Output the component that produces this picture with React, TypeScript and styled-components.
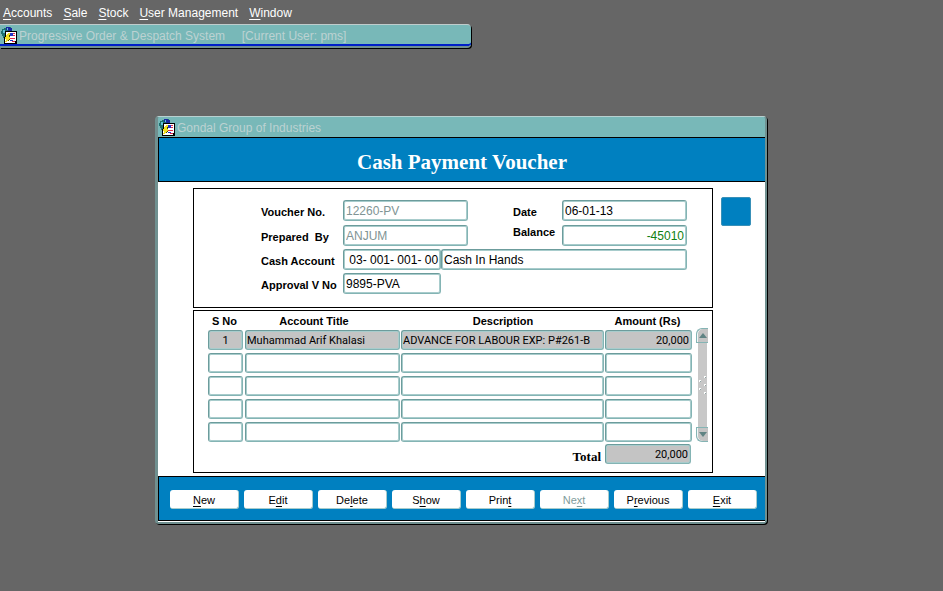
import React from "react";
import styled, { createGlobalStyle, css } from "styled-components";

const colors = {
  desktop: "#666666",
  teal: "#78b8b8",
  edge: "#709090",
  edgeLight: "#b8d0d0",
  blue: "#0080c0",
  fieldDark: "#6c9c9c",
  fieldMid: "#84b4b4",
  fieldLight: "#a8cccc",
  grey: "#c4c4c4",
};

const GlobalStyle = createGlobalStyle`
  *, *::before, *::after { box-sizing: border-box; }
  body {
    margin: 0;
    background: ${colors.desktop};
    font-family: "Liberation Sans", Arial, sans-serif;
    font-size: 12px;
    color: #000;
  }
  button, input { font: inherit; color: inherit; margin: 0; }
`;

const Desktop = styled.div`
  min-height: 100vh;
  min-width: 820px;
`;

const MenuBar = styled.nav`
  display: flex;
  gap: 11px;
  height: 24px;
  padding: 2px 3px 0;
`;

const MenuItem = styled.button`
  border: 0;
  padding: 0;
  background: none;
  color: #fff;
  line-height: 22px;
  white-space: nowrap;
`;

const Mnemonic = styled.span`
  text-decoration: underline;
  text-underline-offset: 2px;
`;

const titleBar = css`
  display: flex;
  align-items: center;
  gap: 2px;
  color: #bcd2d2;
  background: ${colors.teal};
  white-space: pre;
`;

const AppTitle = styled.header`
  ${titleBar}
  width: calc(50% - 1px);
  min-width: 400px;
  height: 24px;
  border-top: 1px solid #c0cccc;
  border-bottom: 2px solid ${colors.edge};
  border-radius: 0 4px 4px 0;
  box-shadow: inset 0 -2px 0 #0020c8, 1px 1px 0 #000;
`;

const Dialog = styled.main`
  margin: 68px 176px 0 155px;
  border: solid ${colors.edge};
  border-width: 1px 2px 2px 3px;
  border-top-color: ${colors.edgeLight};
  border-radius: 4px;
  box-shadow: 1px 1px 0 #000;
  background: ${colors.teal};
`;

const DialogTitle = styled.header`
  ${titleBar}
  height: 20px;
  padding-top: 1px;
  border-radius: 3px 3px 0 0;
`;

const Heading = styled.h1`
  margin: 0;
  padding-top: 3px;
  height: 45px;
  border: solid #000;
  border-width: 1px 0 1px 1px;
  background: ${colors.blue};
  color: #fff;
  font: bold 21px/42px "Liberation Serif", "Times New Roman", serif;
  text-align: center;
`;

const Body = styled.div`
  display: grid;
  grid-template-columns: 1fr 30px;
  column-gap: 8px;
  padding: 6px 14px 3px 35px;
  background: #fff;
`;

const Panels = styled.div`
  display: flex;
  flex-direction: column;
  gap: 2px;
`;

const FormPanel = styled.section`
  display: grid;
  grid-template-columns: 82px 98px 27px 1fr 49px minmax(0, 125px);
  grid-template-rows: 22px repeat(3, 21px);
  row-gap: 3px;
  padding: 11px 25px 13px 67px;
  border: 1px solid #000;
`;

const Label = styled.label<{ $column?: number; $raised?: boolean }>`
  grid-column: ${(p) => p.$column ?? 1};
  padding-top: ${(p) => (p.$raised ? 0 : 2)}px;
  line-height: ${(p) => (p.$raised ? 14 : 21)}px;
  font-size: 11px;
  font-weight: bold;
  white-space: pre;
`;

const Field = styled.input<{ $span?: string; $align?: string; $tone?: string }>`
  grid-column: ${(p) => p.$span ?? "auto"};
  width: 100%;
  min-width: 0;
  height: 21px;
  padding: 0 ${(p) => (p.$align === "right" ? 2 : 0)}px 0 2px;
  border: 1px solid;
  border-color: ${colors.fieldDark} ${colors.fieldMid} ${colors.fieldMid} ${colors.fieldDark};
  border-radius: 3px;
  outline: 0;
  box-shadow: inset 0 0 0 1px ${colors.fieldLight};
  background: #fff;
  color: ${(p) => p.$tone ?? "#000"};
  text-align: ${(p) => p.$align ?? "left"};

  &:disabled {
    color: #809494;
  }
`;

const CellField = styled(Field)<{ $filled?: boolean }>`
  display: block;
  height: 20px;
  padding-left: ${(p) => (p.$align === "center" ? 0 : 1)}px;
  font-family: Roboto, "Liberation Sans", sans-serif;
  font-size: 11px;
  background: ${(p) => (p.$filled ? colors.grey : "#fff")};
`;

const GridPanel = styled.section`
  display: grid;
  grid-template-columns: 1fr 12px;
  column-gap: 4px;
  padding: 0 4px 8px 14px;
  border: 1px solid #000;
`;

const Table = styled.table`
  width: 100%;
  table-layout: fixed;
  border-collapse: collapse;
`;

const Col = styled.col<{ $width?: number }>`
  width: ${(p) => (p.$width ? `${p.$width}px` : "auto")};
`;

const HeadCell = styled.th<{ $shift?: number }>`
  height: 18px;
  padding: 2px ${(p) => p.$shift ?? 0}px 0 0;
  font-size: 11px;
  line-height: 16px;
  white-space: nowrap;
`;

const Cell = styled.td`
  padding: 1px 1px 2px 0;

  &:first-child {
    padding-right: 2px;
  }

  &:last-child {
    padding-right: 0;
  }
`;

const TotalLabelCell = styled.td`
  padding: 5px 4px 0 0;
  text-align: right;
  font: bold 13px/15px "Liberation Serif", "Times New Roman", serif;
`;

const TotalCell = styled.td`
  padding: 0 1px 0 0;
`;

const ScrollBar = styled.div`
  display: flex;
  flex-direction: column;
  height: 114px;
  margin-top: 17px;
`;

const ScrollButton = styled.button<{ $end?: boolean }>`
  display: flex;
  align-items: center;
  justify-content: center;
  height: 15px;
  padding: 0;
  border: 1px solid ${colors.fieldMid};
  border-right: 0;
  border-radius: ${(p) => (p.$end ? "0 0 0 6px" : "6px 0 0 0")};
  box-shadow: inset 1px 0 0 #f0f6f6;
  background: ${colors.grey};
`;

const ScrollTrack = styled.div`
  display: flex;
  flex: 1;
  align-items: center;
  margin: 0 1px 0 2px;
  background: #c8c8c8;
`;

const SideButton = styled.button`
  height: 29px;
  margin-top: 9px;
  padding: 0;
  border: 1px solid #3890b8;
  border-radius: 2px;
  background: ${colors.blue};
`;

const Footer = styled.footer`
  display: flex;
  gap: 5px;
  height: 45px;
  padding: 13px 8px 0 11px;
  border: solid #000;
  border-width: 1px 0 1px 1px;
  background: ${colors.blue};
  box-shadow: 0 1px 0 #fff;
`;

const ActionButton = styled.button`
  flex: 1;
  height: 19px;
  padding: 2px 0 0;
  border: solid ${colors.fieldLight};
  border-width: 0 1px 1px 0;
  border-radius: 3px;
  background: #fff;
  font-size: 11px;
  line-height: 14px;

  &:disabled {
    color: #809c9c;
  }
`;

const FooterSpacer = styled.div`
  height: 1px;
`;

function AppIcon() {
  return (
    <svg width="17" height="17" viewBox="0 0 17 17" shapeRendering="crispEdges" aria-hidden="true">
      <path d="M2 2h2V1h3V0h4v1h1v4H5v6H3V9H2V7H1z" fill="#1c7070" />
      <path d="M6 0h4v1h2v4H8V3H6z" fill="#1828a0" />
      <path d="M3 3h2v3H3zM7 1h1v2H7z" fill="#60c0d8" />
      <path d="M5 4h12v13H4V10h1z" fill="#000" />
      <path d="M6 5h10v9h-1v2H5v-5h1z" fill="#fff" />
      <path d="M10 6h3v3h-3z" fill="#2038c8" />
      <path d="M13 6h2v1h-2zM13 8h2v1h-2zM10 11h5v1h-5zM12 14h3v1h-3z" fill="#e02848" />
      <path d="M10 13h3v1h-3z" fill="#2038c8" />
      <path d="M8 6h2v2H9v2h1v2H9v1H8v1H7v1H5v-1h1v-2H5v-2h1V8h1V7h1z" fill="#f0e020" />
      <path d="M9 8h1v2H9zM9 12h1v1H9zM8 13h1v1H8z" fill="#504800" />
    </svg>
  );
}

function Arrow({ down }: { down?: boolean }) {
  return (
    <svg width="8" height="5" viewBox="0 0 8 5" aria-hidden="true">
      <path d={down ? "M0 0h8L4 5z" : "M0 5h8L4 0z"} fill="#608484" />
    </svg>
  );
}

function Grip() {
  const dots = [[6, 1], [1, 5], [6, 9], [1, 13], [6, 17]];
  return (
    <svg width="9" height="20" viewBox="0 0 9 20" shapeRendering="crispEdges" aria-hidden="true">
      {dots.map(([x, y]) => (
        <g key={y}>
          <path d={`M${x} ${y}h2v2h-2z`} fill="#90a4a4" />
          <path d={`M${x} ${y}h2v1h-1v1h-1z`} fill="#fff" />
        </g>
      ))}
    </svg>
  );
}

function Accel({ text, at = 0 }: { text: string; at?: number }) {
  return (
    <>
      {text.slice(0, at)}
      <Mnemonic>{text[at]}</Mnemonic>
      {text.slice(at + 1)}
    </>
  );
}

const menus = ["Accounts", "Sale", "Stock", "User Management", "Window"];

const rows = [
  ["1", "Muhammad Arif Khalasi", "ADVANCE FOR LABOUR EXP: P#261-B", "20,000"],
  ["", "", "", ""],
  ["", "", "", ""],
  ["", "", "", ""],
  ["", "", "", ""],
];

const columns = ["S No", "Account Title", "Description", "Amount (Rs)"];
const headShift = [4, 18, 0, 2];
const aligns = ["center", "left", "left", "right"];

const actions = [
  { text: "New", at: 0 },
  { text: "Edit", at: 1 },
  { text: "Delete", at: 2 },
  { text: "Show", at: 1 },
  { text: "Print", at: 4 },
  { text: "Next", at: 2, disabled: true },
  { text: "Previous", at: 1 },
  { text: "Exit", at: 0 },
];

export default function App() {
  return (
    <Desktop>
      <GlobalStyle />
      <MenuBar aria-label="Main menu">
        {menus.map((name) => (
          <MenuItem key={name} type="button">
            <Accel text={name} />
          </MenuItem>
        ))}
      </MenuBar>
      <AppTitle>
        <AppIcon />
        {"Progressive Order & Despatch System     [Current User: pms]"}
      </AppTitle>

      <Dialog>
        <DialogTitle>
          <AppIcon />
          Gondal Group of Industries
        </DialogTitle>
        <Heading>Cash Payment Voucher</Heading>
        <Body>
          <Panels>
            <FormPanel>
              <Label htmlFor="voucher">Voucher No.</Label>
              <Field id="voucher" $span="2 / 4" defaultValue="12260-PV" disabled />
              <Label htmlFor="date" $column={5}>Date</Label>
              <Field id="date" defaultValue="06-01-13" />

              <Label htmlFor="prepared">{"Prepared  By"}</Label>
              <Field id="prepared" $span="2 / 4" defaultValue="ANJUM" disabled />
              <Label htmlFor="balance" $column={5} $raised>Balance</Label>
              <Field id="balance" defaultValue="-45010" $align="right" $tone="#108010" />

              <Label htmlFor="account">Cash Account</Label>
              <Field id="account" defaultValue=" 03- 001- 001- 00" />
              <Field aria-label="Cash account name" $span="3 / 7" defaultValue="Cash In Hands" />

              <Label htmlFor="approval">Approval V No</Label>
              <Field id="approval" defaultValue="9895-PVA" />
            </FormPanel>

            <GridPanel>
              <Table>
                <colgroup>
                  <Col $width={37} />
                  <Col $width={156} />
                  <Col />
                  <Col $width={87} />
                </colgroup>
                <thead>
                  <tr>
                    {columns.map((name, i) => (
                      <HeadCell key={name} scope="col" $shift={headShift[i]}>
                        {name}
                      </HeadCell>
                    ))}
                  </tr>
                </thead>
                <tbody>
                  {rows.map((row, r) => (
                    <tr key={r}>
                      {row.map((value, c) => (
                        <Cell key={c}>
                          <CellField
                            aria-label={`${columns[c]}, row ${r + 1}`}
                            defaultValue={value}
                            $align={aligns[c]}
                            $filled={r === 0}
                          />
                        </Cell>
                      ))}
                    </tr>
                  ))}
                </tbody>
                <tfoot>
                  <tr>
                    <TotalLabelCell colSpan={3}>
                      <label htmlFor="total">Total</label>
                    </TotalLabelCell>
                    <TotalCell>
                      <CellField id="total" defaultValue="20,000" $align="right" $filled />
                    </TotalCell>
                  </tr>
                </tfoot>
              </Table>
              <ScrollBar>
                <ScrollButton type="button" aria-label="Scroll up">
                  <Arrow />
                </ScrollButton>
                <ScrollTrack>
                  <Grip />
                </ScrollTrack>
                <ScrollButton type="button" aria-label="Scroll down" $end>
                  <Arrow down />
                </ScrollButton>
              </ScrollBar>
            </GridPanel>
          </Panels>
          <SideButton type="button" aria-label="Open record" />
        </Body>
        <Footer>
          {actions.map(({ text, at, disabled }) => (
            <ActionButton key={text} type="button" disabled={disabled}>
              <Accel text={text} at={at} />
            </ActionButton>
          ))}
        </Footer>
        <FooterSpacer />
      </Dialog>
    </Desktop>
  );
}
